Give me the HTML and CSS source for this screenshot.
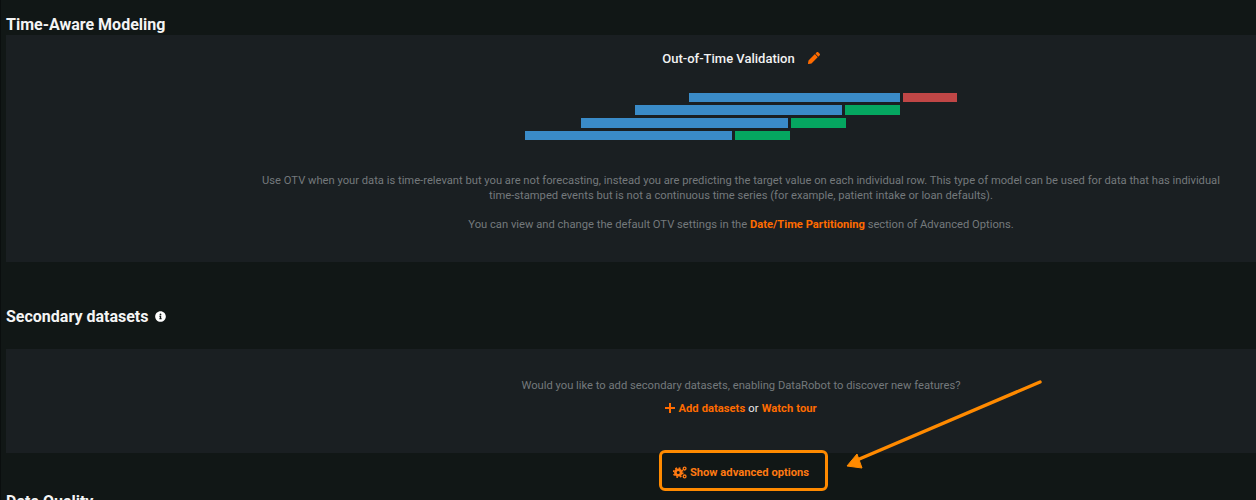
FILE: index.html
```html
<!DOCTYPE html>
<html lang="en">
<head>
  <meta charset="UTF-8" />
  <meta name="viewport" content="width=device-width, initial-scale=1.0" />
  <title>Time-Aware Modeling</title>
  <link rel="stylesheet" href="styles.css">
</head>
<body>
  <div class="page">
    <h2 class="section-title first">Time-Aware Modeling</h2>
    <div class="panel otv-panel">
      <div class="otv-title">
        <span>Out-of-Time Validation</span>
        <svg class="edit-icon" viewBox="0 0 512 512" width="12" height="12"><path fill="#ff6b00" d="M497.9 142.1l-46.100 46.100c-4.700 4.700-12.300 4.700-17 0l-111-111c-4.700-4.700-4.700-12.300 0-17l46.100-46.100c18.700-18.700 49.100-18.700 67.900 0l60.100 60.100c18.800 18.700 18.800 49.100 0 67.900zM284.200 99.800L21.600 362.400.4 483.900c-2.900 16.400 11.400 30.600 27.800 27.800l121.500-21.300 262.600-262.600c4.700-4.700 4.700-12.300 0-17l-111-111c-4.800-4.700-12.400-4.700-17.100 0z"/></svg>
      </div>
      <div class="otv-chart">
        <div class="bar-row row-1"><span class="bar train"></span><span class="bar holdout"></span></div>
        <div class="bar-row row-2"><span class="bar train"></span><span class="bar valid"></span></div>
        <div class="bar-row row-3"><span class="bar train"></span><span class="bar valid"></span></div>
        <div class="bar-row row-4"><span class="bar train"></span><span class="bar valid"></span></div>
      </div>
      <p class="muted otv-desc">Use OTV when your data is time-relevant but you are not forecasting, instead you are predicting the target value on each individual row. This type of model can be used for data that has individual time-stamped events but is not a continuous time series (for example, patient intake or loan defaults).</p>
      <p class="muted otv-note">You can view and change the default OTV settings in the <a class="link">Date/Time Partitioning</a> section of Advanced Options.</p>
    </div>

    <h2 class="section-title second">Secondary datasets
      <svg class="info-icon" viewBox="0 0 512 512" width="11" height="11"><path fill="#fff" d="M256 8C119 8 8 119 8 256s111 248 248 248 248-111 248-248S393 8 256 8zm0 110c23.200 0 42 18.800 42 42s-18.800 42-42 42-42-18.800-42-42 18.800-42 42-42zm56 254c0 6.600-5.400 12-12 12h-88c-6.600 0-12-5.400-12-12v-24c0-6.600 5.400-12 12-12h12v-64h-12c-6.600 0-12-5.400-12-12v-24c0-6.600 5.400-12 12-12h64c6.600 0 12 5.400 12 12v100h12c6.600 0 12 5.400 12 12v24z"/></svg>
    </h2>
    <div class="panel secondary-panel">
      <p class="muted">Would you like to add secondary datasets, enabling DataRobot to discover new features?</p>
      <p class="add-line"><a class="link"><svg class="plus-icon" viewBox="0 0 10 10" width="10" height="10"><path d="M5 0v10M0 5h10" stroke="#ff6b00" stroke-width="2"/></svg> Add datasets</a> <span class="or">or</span> <a class="link">Watch tour</a></p>
    </div>

    <div class="advanced-row">
      <a class="advanced-link">
        <svg class="gears-icon" viewBox="0 0 14 13" width="14" height="13">
          <g fill="none" stroke="#ff7a12">
            <circle cx="5.200" cy="6.500" r="2.800" stroke-width="2.600"/>
            <circle cx="5.200" cy="6.500" r="4.600" stroke-width="1.600" stroke-dasharray="1.800 1.810"/>
            <circle cx="11.600" cy="2.600" r="1.400" stroke-width="1.300"/>
            <circle cx="11.600" cy="10.400" r="1.400" stroke-width="1.300"/>
          </g>
        </svg>
        Show advanced options
      </a>
    </div>

    <h2 class="section-title third">Data Quality</h2>
  </div>

  <!-- annotation drawn over the screenshot -->
  <div class="callout-box"></div>
  <svg class="callout-arrow" width="210" height="110" viewBox="0 0 210 110">
    <path d="M198 12 L15 90" stroke="#ff8a00" stroke-width="3.400" stroke-linecap="round" fill="none"/>
    <path d="M5 96 L15 84 L20 98 Z" fill="#ff8a00" stroke="#ff8a00" stroke-linejoin="round"/>
  </svg>
</body>
</html>
```

FILE: styles.css
```css
html, body {
  height: 500px;
  overflow: hidden;
}
body {
  margin: 0;
  background-color: #111716;
  font-family: Roboto, "Liberation Sans", sans-serif;
  color: #fff;
}
.page {
  border-left: 1px solid #0a0e0e;
  padding-left: 5px;
}
.section-title {
  margin: 0;
  font-size: 16px;
  line-height: 20px;
  font-weight: 700;
  color: #f4f4f4;
  display: flex;
  align-items: center;
  gap: 7px;
}
.section-title.first {
  padding-top: 14px;
  height: 21px;
}
.section-title.second {
  padding-top: 45px;
  height: 42px;
  align-items: flex-start;
}
.section-title.second .info-icon {
  margin-top: 4px;
}
.panel {
  background-color: #1a1f22;
  padding-left: 220px;
  text-align: center;
}
.otv-panel {
  height: 227px;
}
.secondary-panel {
  height: 104px;
}
.otv-title {
  display: flex;
  justify-content: center;
  align-items: center;
  gap: 13px;
  padding-top: 15px;
  height: 16px;
  font-size: 13px;
  font-weight: 500;
  color: #f2f2f2;
}
.otv-chart {
  width: 432px;
  margin: 27px auto 0;
}
.bar-row {
  display: flex;
  gap: 3px;
  height: 10px;
  margin-bottom: 3px;
}
.bar {
  display: block;
  height: 100%;
}
.train {
  background-color: #3a8bc8;
  width: 207px;
}
.holdout {
  background-color: #c04646;
  width: 54px;
}
.valid {
  background-color: #05a660;
  width: 55px;
}
.row-1 {
  margin-left: 164px;
  height: 9px;
}
.row-1 .train { width: 211px; }
.row-2 { margin-left: 110px; }
.row-3 { margin-left: 56px; }
.row-4 {
  height: 9px;
  margin-bottom: 4px;
}
.muted {
  margin: 0;
  font-size: 11.2px;
  line-height: 15px;
  color: #74797c;
}
.otv-desc {
  width: 965px;
  margin: 33px auto 0;
}
.otv-note {
  margin-top: 14px;
}
.secondary-panel .muted {
  padding-top: 29px;
}
.link {
  color: #ff6b00;
  font-weight: 700;
}
.add-line {
  margin: 8px 0 0;
  font-size: 11.2px;
  line-height: 15px;
  word-spacing: 0.4px;
}
.plus-icon {
  vertical-align: -1px;
}
.or {
  color: #e8e8e8;
}
.advanced-row {
  padding: 11px 0 0 220px;
  height: 28px;
  display: flex;
  justify-content: center;
}
.advanced-link {
  display: flex;
  align-items: center;
  gap: 3px;
  height: 16px;
  font-size: 11.2px;
  font-weight: 700;
  color: #ff7a12;
}
.callout-box {
  position: absolute;
  left: 659px;
  top: 450px;
  width: 163px;
  height: 35px;
  border: 3px solid #ff8a00;
  border-radius: 6px;
}
.callout-arrow {
  position: absolute;
  left: 842px;
  top: 370px;
}
```
